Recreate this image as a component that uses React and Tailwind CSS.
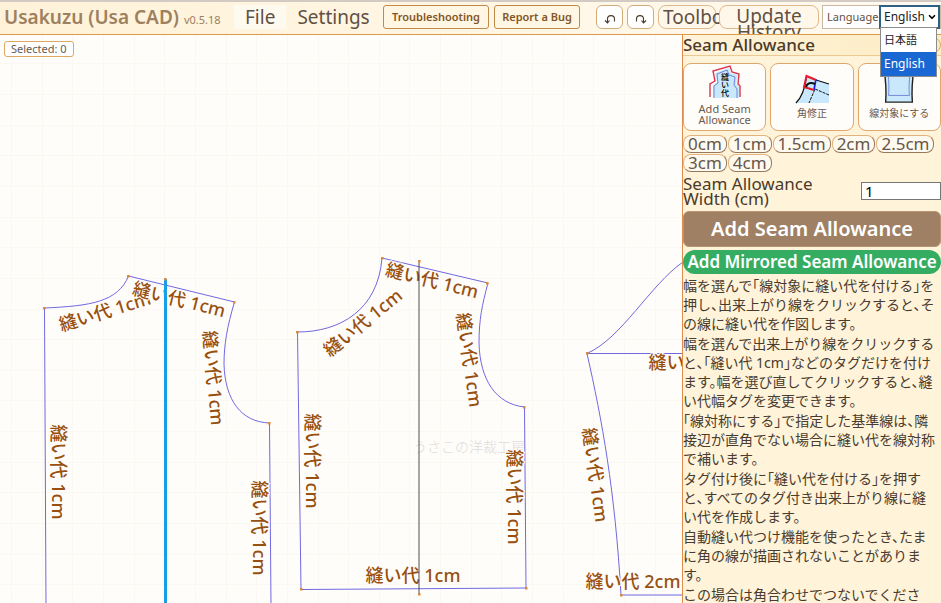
import { ChevronDown } from 'lucide-react';

const LINE = '#7068e0';
const GRID_STEP = 30.65;

const OUTLINES = [
  // front bodice
  'M46 605 L44.5 308 C90 306 118 302 128.500 276 L234.500 302 C227 327 224 345 224 364 C225 400 241 422 269.500 423 L271 605',
  // back bodice
  'M297.500 332 C340 332 378 310 382 258 L488 283 C482 305 479 320 479 343 C480 380 496 404 524.500 407 L526 588 L301 589.500 Z',
  // sleeve
  'M720 353.500 L587 353.500 C622 338 650 285 683 262 L720 246',
  'M587 353.500 C602 420 615 490 621 595 L720 595',
];

const POINTS = [
  [44, 308], [128, 276], [234, 302], [269, 423], [165, 279],
  [297, 332], [382, 258], [487, 283], [524, 407], [526, 588], [301, 589], [419, 261], [419, 594],
  [587, 353], [621, 595],
];

const TAGS = [
  { x: 105, y: 312, angle: -17 },
  { x: 179, y: 300, angle: 14 },
  { x: 213, y: 378, angle: 85 },
  { x: 58, y: 472, angle: 90 },
  { x: 259, y: 528, angle: 90 },
  { x: 363, y: 323, angle: -39 },
  { x: 432, y: 281, angle: 14 },
  { x: 469, y: 360, angle: 82 },
  { x: 312, y: 461, angle: 90 },
  { x: 514, y: 497, angle: 90 },
  { x: 413, y: 576, angle: 0 },
  { x: 696, y: 363, angle: 0 },
  { x: 595, y: 475, angle: 82 },
  { x: 633, y: 582, angle: 0, width: 2 },
];

const WIDTHS = ['0cm', '1cm', '1.5cm', '2cm', '2.5cm', '3cm', '4cm'];

const HELP = [
  '幅を選んで「線対象に縫い代を付ける」を押し、出来上がり線をクリックすると、その線に縫い代を作図します。',
  '幅を選んで出来上がり線をクリックすると、「縫い代 1cm」などのタグだけを付けます。幅を選び直してクリックすると、縫い代幅タグを変更できます。',
  '「線対称にする」で指定した基準線は、隣接辺が直角でない場合に縫い代を線対称で補います。',
  'タグ付け後に「縫い代を付ける」を押すと、すべてのタグ付き出来上がり線に縫い代を作成します。',
  '自動縫い代つけ機能を使ったとき、たまに角の線が描画されないことがあります。',
  'この場合は角合わせでつないでください。',
];

function UndoIcon({ flip }) {
  return (
    <svg viewBox="0 0 12 10" className={`mt-1 h-[10px] w-3 ${flip ? '-scale-x-100' : ''}`} fill="none" stroke="#4a3a28" strokeWidth="1.1">
      <path d="M3.500 8.500 V5 C3.500 0.500 10.500 0.500 10.500 5 V7.500" />
      <path d="M1 6.500 L3.500 9 L5.500 6.500" />
    </svg>
  );
}

function SeamIcon() {
  return (
    <svg viewBox="0 0 32 34" className="h-[34px] w-8">
      <path d="M4 33 V20 L8 17 L6 8 L20 3 L22 8 L29 10 L27 19 L30 22 V33 Z" fill="#c9e8fb" />
      <path d="M1 32 V19 L6 16 L4 6 L21 1 L23 7 L30 9 L29 19 L31 21 V32" fill="none" stroke="#d9374a" strokeWidth="1.4" />
      <path d="M5 33 V21 L9 18 L8 9 L18 5 L20 10 L26 12 L25 20 L28 24 V33" fill="none" stroke="#5c6fd0" strokeWidth="0.8" />
      <g className="fill-black text-[8px] font-medium" textAnchor="middle">
        <text x="16" y="15">縫</text>
        <text x="16" y="23">い</text>
        <text x="16" y="31">代</text>
      </g>
    </svg>
  );
}

function CornerIcon() {
  return (
    <svg viewBox="0 0 36 30" className="h-[30px] w-9">
      <path d="M13 2 L35 10 V29 H3 C9 21 11 13 13 2 Z" fill="#c9e8fb" />
      <path d="M2 29 C8 23 11 14 12.500 3" fill="none" stroke="#111" strokeWidth="1.3" />
      <path d="M22 6 L35 10" fill="none" stroke="#111" strokeWidth="1.2" />
      <path d="M35 21 L21 15 L15 29" fill="none" stroke="#111" strokeWidth="1" strokeDasharray="3 1" />
      <path d="M22 5 L20 16" stroke="#1717e8" strokeWidth="1.6" />
      <path d="M22 6 L12.500 2 L10 13 L20 16" fill="none" stroke="#e8192c" strokeWidth="2" />
      <path d="M12 13 C13 9 17 8 21 10" fill="none" stroke="#111" strokeWidth="2" />
    </svg>
  );
}

function MirrorIcon() {
  return (
    <svg viewBox="0 0 34 42" className="h-[42px] w-[34px]">
      <path d="M1 2 H33 C31 16 30 28 31 40 H3 C4 28 3 16 1 2 Z" fill="#c9e8fb" stroke="#222" strokeWidth="1.5" />
      <path d="M5 4 C6 16 7 24 6 33 H28 C27 24 28 16 29 4" fill="none" stroke="#5c6fd0" strokeWidth="0.8" />
    </svg>
  );
}

function ToolButton({ icon, label }) {
  return (
    <button className="flex h-[68px] flex-col items-center justify-end overflow-hidden rounded-lg border border-[#dfa76c] bg-[#fffdfa] pb-[5px] text-[11px] leading-[11px] text-[#6b5a50]">
      {icon}
      <span className="mt-1">{label}</span>
    </button>
  );
}

function Toolbar() {
  return (
    <header className="relative z-10 flex h-[35px] shrink-0 items-start border-t-2 border-b border-t-[#d3cbc3] border-b-[#dc9a48] bg-gradient-to-r from-[#fff2d8] to-[#fffaf0] pt-[3px] text-[#5f5044]">
      <h1 className="ml-1 w-[230px] shrink-0 text-[19px] leading-6 font-semibold whitespace-nowrap text-[#9c8060]">
        Usakuzu (Usa CAD) <small className="text-[11px] font-normal">v0.5.18</small>
      </h1>
      <nav className="flex w-[149px] shrink-0">
        <button className="h-6 bg-[#fffaf0] px-[11px] text-[19px] leading-6">File</button>
        <button className="h-6 px-[11px] text-[19px] leading-6">Settings</button>
      </nav>
      <div className="flex shrink-0 gap-[5px] text-[11px] font-semibold text-[#82551f]">
        <button className="h-6 w-[106px] rounded-[3px] border border-[#c08a48] bg-[#fff6e4]">Troubleshooting</button>
        <button className="h-6 w-[86px] rounded-[3px] border border-[#c08a48] bg-[#fff6e4]">Report a Bug</button>
      </div>
      <div className="ml-4 flex shrink-0 gap-1">
        <button aria-label="Undo" className="flex h-6 w-[27px] items-center justify-center rounded-md border border-[#d3ac78] bg-white">
          <UndoIcon />
        </button>
        <button aria-label="Redo" className="flex h-6 w-[27px] items-center justify-center rounded-md border border-[#d3ac78] bg-white">
          <UndoIcon flip />
        </button>
        <button className="h-6 w-[58px] rounded-lg border border-[#dfb98c] bg-[#fff8ea] pl-1 text-left text-[19px] leading-[22px]">
          <span className="block w-[57px] overflow-hidden">Toolbox</span>
        </button>
      </div>
      <div className="ml-[3px] h-[29px] w-[100px] shrink-0 overflow-hidden">
        <button className="block h-6 w-full rounded-lg border border-[#dfb98c] bg-[#fff8ea] px-3 text-[19px] leading-4">
          <span className="block h-5 pt-px">Update History</span>
        </button>
      </div>
      <div className="relative ml-[3px] flex h-6 shrink-0 border border-[#c9b8a4] bg-white pl-1 text-[11px] leading-[22px]">
        <label htmlFor="language" className="w-[52px] overflow-hidden">Language</label>
        <div className="relative -my-px">
          <select id="language" defaultValue="en" className="h-6 w-[61px] appearance-none border-2 border-[#2d6186] bg-white pl-[3px] text-xs text-[#222] outline-none">
            <option value="ja">日本語</option>
            <option value="en">English</option>
          </select>
          <ChevronDown className="pointer-events-none absolute top-[7px] right-[3px] size-[10px] text-black" strokeWidth={4} />
          <ul role="listbox" aria-label="Language" className="absolute top-[22px] left-[1px] w-[57px] border border-[#8b8b8b] bg-white text-[11px] leading-6 text-[#222]">
            <li role="option" aria-selected="false" className="h-6 pl-[3px]">日本語</li>
            <li role="option" aria-selected="true" className="h-6 bg-[#1967d2] pl-[3px] text-xs leading-6 text-white">English</li>
          </ul>
        </div>
      </div>
    </header>
  );
}

function PatternCanvas() {
  const steps = Array.from({ length: 64 }, (_, i) => Math.round(i * GRID_STEP));
  return (
    <section aria-label="Pattern" className="relative min-w-0 flex-1 overflow-hidden bg-[#fffdfa]">
      <svg className="absolute inset-0 h-full w-full">
        {/* pattern coordinates start at the top of the window, above the toolbar */}
        <g transform="translate(0 -35)">
          <g stroke="#fbf7f2">
            {steps.map((s) => (
              <path key={s} d={`M${s + 11.5} 0 V3000 M0 ${s + 2.5} H3000`} />
            ))}
          </g>
          <text x="413" y="452" className="fill-[#dedbd8] text-[14px] font-light">うさこの洋裁工房</text>
          <g fill="none" stroke={LINE}>
            {OUTLINES.map((d) => <path key={d} d={d} />)}
          </g>
          <g className="fill-[#97500f] text-[18px] font-medium" textAnchor="middle" stroke="#fffdfa" strokeWidth="2" paintOrder="stroke">
            {TAGS.map(({ x, y, angle, width = 1 }) => (
              <text key={`${x}-${y}`} transform={`translate(${x} ${y}) rotate(${angle})`} y="6">
                縫い代 {width}cm
              </text>
            ))}
          </g>
          <path d="M419 261 V594" stroke="#333" strokeOpacity="0.85" />
          <path d="M165.500 279 V640" stroke="#169fe6" strokeWidth="3" />
          {POINTS.map(([x, y]) => (
            <rect key={`${x}-${y}`} x={x - 1} y={y - 1} width="2.500" height="2.500" fill="#d98a3c" />
          ))}
        </g>
      </svg>
      <output className="absolute top-[6px] left-1 rounded-[3px] border border-[#dba961] bg-white px-[6px] text-[11px] leading-[14px] text-[#665a50]">
        Selected: 0
      </output>
    </section>
  );
}

function SeamPanel() {
  return (
    <aside className="w-[259px] shrink-0 overflow-hidden border-l border-[#df8b4c] bg-[#fff3d9] text-[#4b3a2a] shadow-[-2px_0_6px_rgba(120,80,30,0.12)]">
      <div className="flex h-[21px] items-center justify-between border-b border-[#ecc893] bg-gradient-to-r from-[#fff3d9] to-[#fdecc4]">
        <h2 className="text-[17px] leading-5 font-medium">Seam Allowance</h2>
        <button aria-label="Close" className="size-4 rounded-full border border-[#dfa76c]" />
      </div>
      <div className="mt-[7px] grid grid-cols-3 gap-1">
        <ToolButton icon={<SeamIcon />} label="Add Seam Allowance" />
        <ToolButton icon={<CornerIcon />} label={<span className="block pb-[6px] text-[10px]">角修正</span>} />
        <ToolButton icon={<MirrorIcon />} label={<span className="block pb-[6px] text-[10px] whitespace-nowrap">線対象にする</span>} />
      </div>
      <div className="mt-1 flex flex-wrap gap-px text-[#66574a]">
        {WIDTHS.map((w) => (
          <button key={w} className="h-[18px] rounded-lg border border-t-[#e2b37c] border-r-[#96795c] border-b-[#96795c] border-l-[#e2b37c] bg-[#fffaf0] px-1 text-[17px] leading-4">
            {w}
          </button>
        ))}
      </div>
      <div className="mt-1 flex items-center justify-between text-[17px] leading-[15px]">
        <label htmlFor="seam-width" className="w-[150px]">Seam Allowance Width (cm)</label>
        <input id="seam-width" type="text" defaultValue="1" className="h-[18px] w-20 border border-[#767676] bg-white px-[3px] text-[15px] text-black" />
      </div>
      <button className="mt-[5px] block h-9 w-full rounded-md border border-[#b79572] bg-[#9f8064] text-[20px] leading-8 font-semibold text-white">
        Add Seam Allowance
      </button>
      <button className="mt-[3px] block h-6 w-full rounded-full bg-[#34ad63] text-[17px] leading-6 font-semibold whitespace-nowrap text-white">
        Add Mirrored Seam Allowance
      </button>
      <div className="mt-[2px] flex flex-col gap-px pr-[3px] text-[14px] leading-[19px] text-[#493b2e] [font-feature-settings:'halt']">
        {HELP.map((text) => <p key={text}>{text}</p>)}
      </div>
    </aside>
  );
}

export default function App() {
  return (
    <div lang="ja" className="flex h-screen flex-col overflow-hidden font-['Noto_Sans','Noto_Sans_CJK_JP',sans-serif]">
      <Toolbar />
      <main className="flex min-h-0 flex-1">
        <PatternCanvas />
        <SeamPanel />
      </main>
    </div>
  );
}
